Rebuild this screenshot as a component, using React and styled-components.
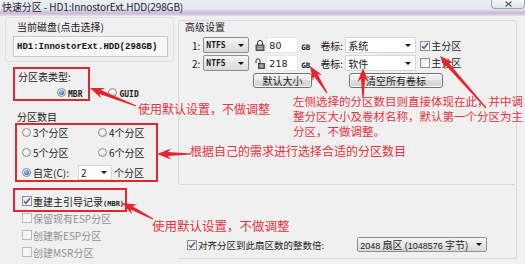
import React from "react";
import styled, { createGlobalStyle } from "styled-components";

const GlobalStyle = createGlobalStyle`
  html, body {
    margin: 0;
    padding: 0;
    background: #f0f0f0;
  }
  * {
    box-sizing: border-box;
  }
`;

const Window = styled.div`
  position: relative;
  width: 525px;
  height: 264px;
  overflow: hidden;
  background: #f0f0f0;
  font-family: "Noto Sans CJK SC", "Liberation Sans", sans-serif;
  font-size: 10px;
  color: #1a1a1a;
`;

const TitleBar = styled.div`
  height: 16px;
  display: flex;
  align-items: flex-start;
  justify-content: space-between;
  background: linear-gradient(#eaeff6 0%, #e3e9f1 55%, #d6c6df 72%, #cdb8d9 86%, #e9e4ed 100%);
`;

const TitleText = styled.div`
  padding: 1px 0 0 2px;
  height: 12px;
  line-height: 11px;
  font-size: 10px;
  color: #222;
  white-space: nowrap;
  letter-spacing: -0.1px;
`;

const CloseButton = styled.div`
  width: 34px;
  height: 9px;
  border: 1px solid #9aa3b0;
  border-top: none;
  border-radius: 0 0 4px 4px;
  background: linear-gradient(#f6f7f9, #dfe3e9);
  display: flex;
  align-items: center;
  justify-content: center;
`;

const Body = styled.div`
  display: flex;
  gap: 4px;
  padding: 1px 0 0 5px;
`;

const LeftCol = styled.div`
  width: 169px;
  display: flex;
  flex-direction: column;
`;

const DiskGroup = styled.div`
  height: 45px;
  border: 1px solid #dde2e7;
  border-radius: 3px;
  padding: 3px 0 0 0;
`;

const Label = styled.div`
  height: 12px;
  line-height: 12px;
  white-space: nowrap;
  padding-left: ${(p) => p.$indent || 0}px;
  margin-top: ${(p) => p.$top || 0}px;
  font-size: ${(p) => p.$size || 10}px;
`;

const DiskField = styled.div`
  margin: 3px 0 0 7px;
  width: 155px;
  height: 21px;
  border: 1px solid #c6c9cd;
  background: #f7f7f7;
  display: flex;
  align-items: center;
  padding-left: 3px;
  font-family: "Liberation Mono", "DejaVu Sans Mono", monospace;
  font-weight: bold;
  font-size: 9px;
  color: #111;
`;

const Latin = styled.span`
  font-family: "DejaVu Sans Mono", "Liberation Mono", monospace;
  font-weight: bold;
  font-size: ${(p) => p.$size || 8}px;
`;

const RadioRow = styled.div`
  display: flex;
  gap: 26px;
  height: 12px;
  margin-top: 3px;
  padding-left: 52px;
`;

const Choice = styled.div`
  display: inline-flex;
  align-items: center;
  gap: ${(p) => p.$gap ?? 2}px;
  height: 12px;
  white-space: nowrap;
  color: ${(p) => (p.$disabled ? "#8f8f8f" : "#1a1a1a")};
`;

const RadioDot = styled.span`
  flex: none;
  width: 9px;
  height: 9px;
  border-radius: 50%;
  border: 1px solid #8a8c8e;
  background: radial-gradient(circle at 40% 35%, #ffffff, #d8d8d8);
  display: inline-flex;
  align-items: center;
  justify-content: center;

  &::after {
    content: "";
    width: 5px;
    height: 5px;
    border-radius: 50%;
    background: radial-gradient(circle at 40% 35%, #a8d6f7, #2a63ab 75%);
    display: ${(p) => (p.$on ? "block" : "none")};
  }
`;

const CountGrid = styled.div`
  display: grid;
  grid-template-columns: 76px auto;
  grid-auto-rows: 12px;
  row-gap: 8px;
  padding-left: 17px;
  margin-top: 3px;
`;

const CustomRow = styled.div`
  grid-column: 1 / span 2;
  display: flex;
  align-items: center;
  height: 12px;
`;

const Combo = styled.div`
  flex: none;
  width: ${(p) => p.$w}px;
  height: ${(p) => p.$h || 16}px;
  margin-left: ${(p) => p.$ml || 0}px;
  display: flex;
  align-items: center;
  justify-content: space-between;
  padding: 0 4px 0 2px;
  border: 1px solid ${(p) => (p.$flat ? "#d3d8de" : "#8e8f8f")};
  border-radius: ${(p) => (p.$flat ? 0 : 2)}px;
  background: ${(p) =>
    p.$flat ? "#ffffff" : "linear-gradient(#f6f6f6, #e7e7e7 50%, #d9d9d9)"};
  font-size: 10px;
  white-space: nowrap;

  &::after {
    content: "";
    border-left: 3px solid transparent;
    border-right: 3px solid transparent;
    border-top: 3px solid #111;
  }
`;

const CheckList = styled.div`
  display: flex;
  flex-direction: column;
  gap: 5px;
  margin-top: 17px;
  padding-left: 17px;
`;

const Box = styled.span`
  flex: none;
  width: 10px;
  height: 10px;
  border: 1px solid ${(p) => (p.$disabled ? "#bcbcbc" : "#8e8f8f")};
  background: ${(p) =>
    p.$disabled ? "#f4f4f4" : "linear-gradient(135deg, #e6e6e6, #ffffff)"};
  display: inline-flex;
  align-items: center;
  justify-content: center;
`;

const RightCol = styled.div`
  width: 339px;
  display: flex;
  flex-direction: column;
`;

const Group = styled.div`
  margin-top: 3px;
  height: 165px;
  border: 1px solid #d5dbe2;
  border-radius: 3px;
`;

const GroupTitle = styled.div`
  height: 12px;
  line-height: 12px;
  padding-left: 6px;
  white-space: nowrap;
`;

const PartRow = styled.div`
  display: flex;
  align-items: center;
  height: 16px;
  margin-top: ${(p) => p.$top}px;
  padding-left: 13px;
`;

const Gap = styled.span`
  flex: none;
  margin-left: ${(p) => p.$ml || 0}px;
  white-space: nowrap;
`;

const SizeInput = styled.div`
  flex: none;
  width: 32px;
  height: 16px;
  margin-left: 1px;
  background: #ffffff;
  border: 1px solid #e4e8ee;
  padding-left: 2px;
  display: flex;
  align-items: center;
  font-family: "DejaVu Sans", "Liberation Sans", sans-serif;
  font-size: 9.5px;
  color: #222;
`;

const ButtonRow = styled.div`
  display: flex;
  gap: 37px;
  margin-top: 2px;
  padding-left: 74px;
`;

const Button = styled.div`
  width: ${(p) => p.$w}px;
  height: 15px;
  border: 1px solid #707070;
  border-radius: 3px;
  background: linear-gradient(#f3f3f3 0%, #ebebeb 45%, #dddddd 50%, #d0d0d0 100%);
  box-shadow: inset 0 0 0 1px #fbfbfb;
  display: flex;
  align-items: center;
  justify-content: center;
  font-size: 10px;
  white-space: nowrap;
`;

const AlignFrame = styled.div`
  height: 74px;
  border-right: 1px solid #d5dbe2;
  border-bottom: 1px solid #d5dbe2;
  padding-top: 52px;
  padding-left: 9px;
`;

const AlignRow = styled.div`
  display: flex;
  align-items: center;
  height: 15px;
  font-size: 9.5px;
`;

const Small = styled.span`
  font-family: "Liberation Sans", "DejaVu Sans", sans-serif;
  font-size: 9px;
`;

const Overlay = styled.div`
  position: absolute;
  inset: 0;
  pointer-events: none;
`;

const RedBox = styled.div`
  position: absolute;
  left: ${(p) => p.$x}px;
  top: ${(p) => p.$y}px;
  width: ${(p) => p.$w}px;
  height: ${(p) => p.$h}px;
  border: 2px solid #e0262e;
`;

const Note = styled.div`
  position: absolute;
  left: ${(p) => p.$x}px;
  top: ${(p) => p.$y}px;
  color: #e6333f;
  font-size: ${(p) => p.$size || 12}px;
  line-height: ${(p) => p.$lh || 14}px;
  white-space: pre;
`;

const ArrowLayer = styled.svg`
  position: absolute;
  left: 0;
  top: 0;
`;

const Check = () => (
  <svg width="8" height="8" viewBox="0 0 8 8">
    <path d="M1 4.2 L3 6.3 L7 1.2" fill="none" stroke="#4b66a8" strokeWidth="1.6" />
  </svg>
);

const Radio = ({ on, children }) => (
  <Choice>
    <RadioDot $on={on} />
    <span>{children}</span>
  </Choice>
);

const CheckItem = ({ checked, disabled, children }) => (
  <Choice $disabled={disabled} $gap={1}>
    <Box $disabled={disabled}>{checked && <Check />}</Box>
    <span>{children}</span>
  </Choice>
);

const LockIcon = ({ open }) => (
  <svg width="10" height="11" viewBox="0 0 10 11" style={{ flex: "none", marginLeft: 6 }}>
    {open ? (
      <>
        <path d="M1 5 V2.8 a2 2 0 0 1 4 0 V5" fill="none" stroke="#333" strokeWidth="1" />
        <rect x="3.5" y="5.5" width="6" height="5" fill="#777" stroke="#333" strokeWidth="0.8" />
        <line x1="5" y1="7.2" x2="8" y2="7.2" stroke="#ddd" strokeWidth="0.7" />
        <line x1="5" y1="8.8" x2="8" y2="8.8" stroke="#ddd" strokeWidth="0.7" />
      </>
    ) : (
      <>
        <path d="M2.5 5 V3 a2.5 2.5 0 0 1 5 0 V5" fill="none" stroke="#333" strokeWidth="1" />
        <rect x="1" y="5" width="8" height="5.5" fill="#777" stroke="#333" strokeWidth="0.8" />
        <line x1="2.5" y1="6.8" x2="7.5" y2="6.8" stroke="#ddd" strokeWidth="0.7" />
        <line x1="2.5" y1="8.6" x2="7.5" y2="8.6" stroke="#ddd" strokeWidth="0.7" />
      </>
    )}
  </svg>
);

function arrowPoints([x1, y1, x2, y2], head = 14, headW = 11) {
  const dx = x2 - x1;
  const dy = y2 - y1;
  const len = Math.hypot(dx, dy);
  const ux = dx / len;
  const uy = dy / len;
  const px = -uy;
  const py = ux;
  const bx = x2 - ux * head;
  const by = y2 - uy * head;
  const sx = bx + ux * 3;
  const sy = by + uy * 3;
  const pts = [
    [x1 + px * 0.6, y1 + py * 0.6],
    [sx + px * 2, sy + py * 2],
    [bx + px * headW / 2, by + py * headW / 2],
    [x2, y2],
    [bx - px * headW / 2, by - py * headW / 2],
    [sx - px * 2, sy - py * 2],
    [x1 - px * 0.6, y1 - py * 0.6],
  ];
  return pts.map((p) => p.map((v) => v.toFixed(1)).join(",")).join(" ");
}

const arrows = [
  [136, 106, 90, 88],
  [327, 93, 310, 66],
  [363, 98, 363, 68],
  [486, 108, 440, 56],
  [191, 154, 157, 154],
  [153, 219, 122, 203],
];

const PartitionRow = ({ no, size, open, label, primary, top }) => (
  <PartRow $top={top}>
    <Gap>{no}:</Gap>
    <Combo $w={46} $ml={3}>
      <Latin>NTFS</Latin>
    </Combo>
    <LockIcon open={open} />
    <SizeInput>{size}</SizeInput>
    <Gap $ml={3}>
      <Latin $size={7.5}>GB</Latin>
    </Gap>
    <Gap $ml={10}>卷标:</Gap>
    <Combo $w={71} $ml={2} $flat>
      <span>{label}</span>
    </Combo>
    <Gap $ml={4}>
      <CheckItem checked={primary}>主分区</CheckItem>
    </Gap>
  </PartRow>
);

export default function App() {
  return (
    <>
      <GlobalStyle />
      <Window>
        <TitleBar>
          <TitleText>快速分区 - HD1:InnostorExt.HDD(298GB)</TitleText>
          <CloseButton>
            <svg width="7" height="6" viewBox="0 0 7 6">
              <path d="M0.5 0.5 L6.5 5.5 M6.5 0.5 L0.5 5.5" stroke="#555" strokeWidth="1.2" />
            </svg>
          </CloseButton>
        </TitleBar>

        <Body>
          <LeftCol>
            <DiskGroup>
              <Label $indent={11}>当前磁盘(点击选择)</Label>
              <DiskField>HD1:InnostorExt.HDD(298GB)</DiskField>
            </DiskGroup>

            <Label $indent={13} $top={9}>分区表类型:</Label>
            <RadioRow>
              <Radio on>
                <Latin>MBR</Latin>
              </Radio>
              <Radio>
                <Latin>GUID</Latin>
              </Radio>
            </RadioRow>

            <Label $indent={12} $top={13}>分区数目</Label>
            <CountGrid>
              <Radio>3个分区</Radio>
              <Radio>4个分区</Radio>
              <Radio>5个分区</Radio>
              <Radio>6个分区</Radio>
              <CustomRow>
                <Radio on>自定(C):</Radio>
                <Combo $w={34} $h={15} $ml={9} $flat>
                  <span>2</span>
                </Combo>
                <Gap $ml={2}>个分区</Gap>
              </CustomRow>
            </CountGrid>

            <CheckList>
              <CheckItem checked>
                重建主引导记录<Latin $size={7}>(MBR)</Latin>
              </CheckItem>
              <CheckItem disabled>保留现有ESP分区</CheckItem>
              <CheckItem disabled>创建新ESP分区</CheckItem>
              <CheckItem disabled>创建MSR分区</CheckItem>
            </CheckList>
          </LeftCol>

          <RightCol>
            <Group>
              <GroupTitle>高级设置</GroupTitle>
              <PartitionRow no={1} size="80" label="系统" primary top={4} />
              <PartitionRow no={2} size="218" label="软件" open top={2} />
              <ButtonRow>
                <Button $w={59}>默认大小</Button>
                <Button $w={94}>清空所有卷标</Button>
              </ButtonRow>
            </Group>
            <AlignFrame>
              <AlignRow>
                <CheckItem checked>对齐分区到此扇区数的整数倍:</CheckItem>
                <Combo $w={130} $h={15} $ml={33}>
                  <span>
                    <Small>2048</Small> 扇区 <Small>(1048576</Small> 字节)
                  </span>
                </Combo>
              </AlignRow>
            </AlignFrame>
          </RightCol>
        </Body>

        <Overlay>
          <RedBox $x={13} $y={67} $w={77} $h={34} />
          <RedBox $x={15} $y={123} $w={143} $h={59} />
          <RedBox $x={13} $y={188} $w={114} $h={24} />

          <Note $x={138} $y={102}>使用默认设置，不做调整</Note>
          <Note $x={293} $y={94} $size={11.5} $lh={15}>
            {"左侧选择的分区数目则直接体现在此，并中调\n整分区大小及卷材名称，默认第一个分区为主\n分区，不做调整。"}
          </Note>
          <Note $x={190} $y={144}>根据自己的需求进行选择合适的分区数目</Note>
          <Note $x={152} $y={219} $size={12.5}>使用默认设置，不做调整</Note>

          <ArrowLayer width="525" height="264" viewBox="0 0 525 264">
            {arrows.map((a, i) => (
              <polygon key={i} points={arrowPoints(a)} fill="#e3262e" />
            ))}
          </ArrowLayer>
        </Overlay>
      </Window>
    </>
  );
}
